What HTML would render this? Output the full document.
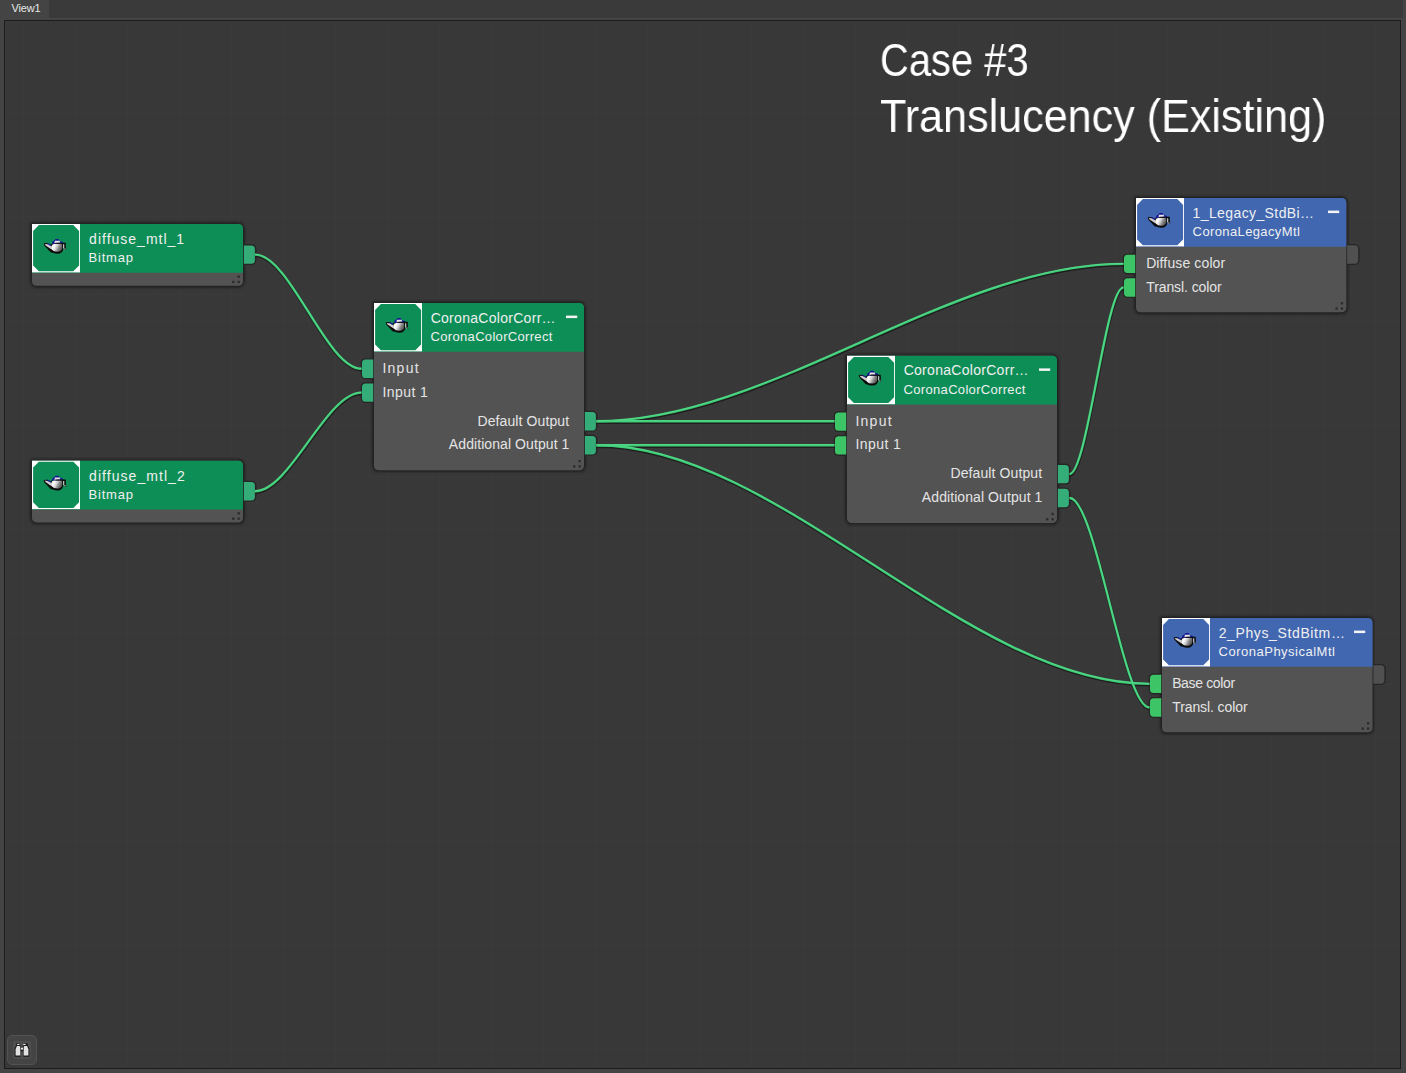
<!DOCTYPE html>
<html><head><meta charset="utf-8"><title>Slate Material Editor - View1</title>
<style>
html,body{margin:0;padding:0}
body{width:1406px;height:1073px;background:#444444;position:relative;overflow:hidden;font-family:"Liberation Sans",sans-serif}
#topbar{position:absolute;left:49px;top:0;width:1354px;height:18px;background:#3a3a3a}
#canvas{position:absolute;left:4px;top:20px;width:1395px;height:1047px;border:1px solid #1c1c1c;background-color:#383838;
 background-image:linear-gradient(to right,rgba(255,255,255,.010) 1px,transparent 1px),linear-gradient(to bottom,rgba(255,255,255,.010) 1px,transparent 1px);
 background-size:26px 26px;background-position:18px 13px}
#gfx{position:absolute;left:0;top:0}
.t{position:absolute;white-space:pre;line-height:normal;transform-origin:0 0;display:block}
#nav{position:absolute;left:7px;top:1035px;width:28px;height:28px;border:1px solid #525252;border-radius:5px;background:#444444}
#nav i{position:absolute;left:5px;top:5px;width:18px;height:18px;border-radius:2px;background:#4e4e4e}
</style></head><body>
<div id="topbar"></div>
<div id="canvas"></div>
<div id="nav"><i></i></div>
<svg id="gfx" width="1406" height="1073" viewBox="0 0 1406 1073">
<defs>
<filter id="soft2" x="-5%" y="-10%" width="110%" height="120%"><feGaussianBlur stdDeviation="1.05"/></filter>
<filter id="soft" x="-5%" y="-5%" width="110%" height="110%"><feGaussianBlur stdDeviation="0.65"/></filter>
<linearGradient id="tpg" x1="0" y1="0" x2="1" y2="0.35">
<stop offset="0" stop-color="#e6e6e6"/><stop offset="0.3" stop-color="#ffffff"/><stop offset="0.55" stop-color="#cfcfcf"/><stop offset="0.75" stop-color="#8e8e8e"/><stop offset="1" stop-color="#5a5a5a"/>
</linearGradient>
<g id="teapot">
<path d="M5.7,12.2 L9.4,12.0 L14.2,14.6 L14.6,22 L12.6,21.2 L6.4,14.8 Z" fill="#0c0c0c"/>
<path d="M12.8,15 Q13,12 16,12 H24.6 Q25.6,12.6 25.4,17 Q25,22.8 19.4,22.8 Q14.6,22.8 13,19.6 Z" fill="#0b0b0b"/>
<path d="M24.4,12.7 H27 V17.6 L27.8,18.8" fill="none" stroke="#0e0e0e" stroke-width="1.7"/>
<path d="M13.9,12.6 L14.6,10.4 L16.6,9.2 L17.6,8 L20.6,8 L21.6,9.9 L25,11 L25.4,12.2 L15,13 Z" fill="#161694"/>
<path d="M9.2,11.9 L13,13.6 L12.8,15 L9.6,13.2 Z" fill="#1c1cb0"/>
<path d="M6.7,12.9 L9.4,13.3 L13.6,15.4 L14.2,18.4 L12.4,17.8 L7.6,14.4 Z" fill="#cfcfcf"/>
<path d="M13.4,15.4 Q13.6,12.9 16,12.9 H23.6 Q24.4,13.4 24.2,17 Q23.8,20.8 19.4,20.8 Q15.4,20.8 13.8,18.6 Z" fill="url(#tpg)"/>
<path d="M16.4,12.2 L16.9,9.7 L21.6,9.7 L22.4,11.6 Z" fill="#e6e6e6"/>
<path d="M17.4,12.3 H25.4" stroke="#141414" stroke-width="1"/>
<path d="M25.7,13.3 V17.4" fill="none" stroke="#dcdcdc" stroke-width="1"/>
<rect x="26.4" y="17.5" width="1.1" height="1.1" fill="#e8e8e8"/>
</g>
</defs>
<path d="M31.7,222.3 H238.49999999999997 A6.3,6.3 0 0 1 244.79999999999998,228.60000000000002 V281.5 A6.3,6.3 0 0 1 238.49999999999997,287.8 H36.5 A6.3,6.3 0 0 1 30.2,281.5 V223.8 A1.5,1.5 0 0 1 31.7,222.3 Z" fill="#232323" filter="url(#soft2)"/>
<path d="M243,244.1 H251.5 A5,5 0 0 1 256.5,249.1 V260.1 A5,5 0 0 1 251.5,265.1 H243 V244.1 Z" fill="#272727" filter="url(#soft)"/><path d="M243.9,245.4 H251.3 A3.6,3.6 0 0 1 254.9,249.0 V260.2 A3.6,3.6 0 0 1 251.3,263.8 H243.9 V245.4 Z" fill="#35ad78"/>
<path d="M32,224 H238.5 A4.5,4.5 0 0 1 243,228.5 V281.2 A4.5,4.5 0 0 1 238.5,285.7 H36.5 A4.5,4.5 0 0 1 32,281.2 V224 Z" fill="#535353"/>
<path d="M32,224 H238.5 A4.5,4.5 0 0 1 243,228.5 V272.7 H32 V224 Z" fill="#0e8e57"/>
<rect x="32" y="224" width="48" height="48.4" fill="#ffffff"/>
<path d="M38.9,225.1 H73.3 L79.1,230.9 V265.5 L73.3,271.3 H38.9 L33.1,265.5 V230.9 Z" fill="#0e8e57"/>
<use href="#teapot" x="38" y="231"/>
<rect x="237.5" y="280.79999999999995" width="2.3" height="2.3" fill="#2b2b2b"/>
<rect x="232.1" y="280.79999999999995" width="2.3" height="2.3" fill="#2b2b2b"/>
<rect x="237.5" y="275.49999999999994" width="2.3" height="2.3" fill="#2b2b2b"/>
<path d="M31.7,459.0 H238.49999999999997 A6.3,6.3 0 0 1 244.79999999999998,465.3 V518.2 A6.3,6.3 0 0 1 238.49999999999997,524.5 H36.5 A6.3,6.3 0 0 1 30.2,518.2 V460.5 A1.5,1.5 0 0 1 31.7,459.0 Z" fill="#232323" filter="url(#soft2)"/>
<path d="M243,480.7 H251.5 A5,5 0 0 1 256.5,485.7 V496.7 A5,5 0 0 1 251.5,501.7 H243 V480.7 Z" fill="#272727" filter="url(#soft)"/><path d="M243.9,482.0 H251.3 A3.6,3.6 0 0 1 254.9,485.6 V496.79999999999995 A3.6,3.6 0 0 1 251.3,500.4 H243.9 V482.0 Z" fill="#35ad78"/>
<path d="M32,460.7 H238.5 A4.5,4.5 0 0 1 243,465.2 V517.9 A4.5,4.5 0 0 1 238.5,522.4 H36.5 A4.5,4.5 0 0 1 32,517.9 V460.7 Z" fill="#535353"/>
<path d="M32,460.7 H238.5 A4.5,4.5 0 0 1 243,465.2 V509.4 H32 V460.7 Z" fill="#0e8e57"/>
<rect x="32" y="460.7" width="48" height="48.4" fill="#ffffff"/>
<path d="M38.9,461.8 H73.3 L79.1,467.6 V502.2 L73.3,508.0 H38.9 L33.1,502.2 V467.6 Z" fill="#0e8e57"/>
<use href="#teapot" x="38" y="467.7"/>
<rect x="237.5" y="517.5" width="2.3" height="2.3" fill="#2b2b2b"/>
<rect x="232.1" y="517.5" width="2.3" height="2.3" fill="#2b2b2b"/>
<rect x="237.5" y="512.2" width="2.3" height="2.3" fill="#2b2b2b"/>
<path d="M373.7,301.3 H579.5 A6.3,6.3 0 0 1 585.8,307.6 V466.0 A6.3,6.3 0 0 1 579.5,472.3 H378.5 A6.3,6.3 0 0 1 372.2,466.0 V302.8 A1.5,1.5 0 0 1 373.7,301.3 Z" fill="#232323" filter="url(#soft2)"/>
<path d="M365.6,358.3 H374.0 V379.3 H365.6 A5,5 0 0 1 360.6,374.3 V363.3 A5,5 0 0 1 365.6,358.3 Z" fill="#272727" filter="url(#soft)"/><path d="M365.6,359.6 H373.2 V378.0 H365.6 A3.6,3.6 0 0 1 362,374.4 V363.20000000000005 A3.6,3.6 0 0 1 365.6,359.6 Z" fill="#35ad78"/>
<path d="M365.6,382.1 H374.0 V403.1 H365.6 A5,5 0 0 1 360.6,398.1 V387.1 A5,5 0 0 1 365.6,382.1 Z" fill="#272727" filter="url(#soft)"/><path d="M365.6,383.40000000000003 H373.2 V401.8 H365.6 A3.6,3.6 0 0 1 362,398.2 V387.00000000000006 A3.6,3.6 0 0 1 365.6,383.40000000000003 Z" fill="#35ad78"/>
<path d="M584,410.8 H592.5 A5,5 0 0 1 597.5,415.8 V426.8 A5,5 0 0 1 592.5,431.8 H584 V410.8 Z" fill="#272727" filter="url(#soft)"/><path d="M584.9,412.1 H592.3 A3.6,3.6 0 0 1 595.9,415.70000000000005 V426.9 A3.6,3.6 0 0 1 592.3,430.5 H584.9 V412.1 Z" fill="#35ad78"/>
<path d="M584,434.7 H592.5 A5,5 0 0 1 597.5,439.7 V450.7 A5,5 0 0 1 592.5,455.7 H584 V434.7 Z" fill="#272727" filter="url(#soft)"/><path d="M584.9,436.0 H592.3 A3.6,3.6 0 0 1 595.9,439.6 V450.79999999999995 A3.6,3.6 0 0 1 592.3,454.4 H584.9 V436.0 Z" fill="#35ad78"/>
<path d="M374,303 H579.5 A4.5,4.5 0 0 1 584,307.5 V465.7 A4.5,4.5 0 0 1 579.5,470.2 H378.5 A4.5,4.5 0 0 1 374,465.7 V303 Z" fill="#535353"/>
<path d="M374,303 H579.5 A4.5,4.5 0 0 1 584,307.5 V351.7 H374 V303 Z" fill="#0e8e57"/>
<rect x="374" y="303" width="48" height="48.4" fill="#ffffff"/>
<path d="M380.90000000000003,304.1 H415.3 L421.1,309.90000000000003 V344.5 L415.3,350.3 H380.90000000000003 L375.1,344.5 V309.90000000000003 Z" fill="#0e8e57"/>
<use href="#teapot" x="380" y="310"/>
<rect x="566" y="315.6" width="11.2" height="2.5" fill="#f4f4f4"/>
<rect x="578.5" y="465.29999999999995" width="2.3" height="2.3" fill="#2b2b2b"/>
<rect x="573.1" y="465.29999999999995" width="2.3" height="2.3" fill="#2b2b2b"/>
<rect x="578.5" y="459.99999999999994" width="2.3" height="2.3" fill="#2b2b2b"/>
<path d="M846.7,354.1 H1052.5 A6.3,6.3 0 0 1 1058.8,360.40000000000003 V518.8000000000001 A6.3,6.3 0 0 1 1052.5,525.1 H851.5 A6.3,6.3 0 0 1 845.2,518.8000000000001 V355.6 A1.5,1.5 0 0 1 846.7,354.1 Z" fill="#232323" filter="url(#soft2)"/>
<path d="M838.6,411.1 H847.0 V432.1 H838.6 A5,5 0 0 1 833.6,427.1 V416.1 A5,5 0 0 1 838.6,411.1 Z" fill="#272727" filter="url(#soft)"/><path d="M838.6,412.40000000000003 H846.2 V430.8 H838.6 A3.6,3.6 0 0 1 835,427.2 V416.00000000000006 A3.6,3.6 0 0 1 838.6,412.40000000000003 Z" fill="#3dc467"/>
<path d="M838.6,434.9 H847.0 V455.9 H838.6 A5,5 0 0 1 833.6,450.9 V439.9 A5,5 0 0 1 838.6,434.9 Z" fill="#272727" filter="url(#soft)"/><path d="M838.6,436.2 H846.2 V454.59999999999997 H838.6 A3.6,3.6 0 0 1 835,450.99999999999994 V439.8 A3.6,3.6 0 0 1 838.6,436.2 Z" fill="#3dc467"/>
<path d="M1057,463.6 H1065.5 A5,5 0 0 1 1070.5,468.6 V479.6 A5,5 0 0 1 1065.5,484.6 H1057 V463.6 Z" fill="#272727" filter="url(#soft)"/><path d="M1057.9,464.90000000000003 H1065.3000000000002 A3.6,3.6 0 0 1 1068.9,468.50000000000006 V479.7 A3.6,3.6 0 0 1 1065.3000000000002,483.3 H1057.9 V464.90000000000003 Z" fill="#35ad78"/>
<path d="M1057,487.5 H1065.5 A5,5 0 0 1 1070.5,492.5 V503.5 A5,5 0 0 1 1065.5,508.5 H1057 V487.5 Z" fill="#272727" filter="url(#soft)"/><path d="M1057.9,488.8 H1065.3000000000002 A3.6,3.6 0 0 1 1068.9,492.40000000000003 V503.59999999999997 A3.6,3.6 0 0 1 1065.3000000000002,507.2 H1057.9 V488.8 Z" fill="#35ad78"/>
<path d="M847,355.8 H1052.5 A4.5,4.5 0 0 1 1057,360.3 V518.5 A4.5,4.5 0 0 1 1052.5,523.0 H851.5 A4.5,4.5 0 0 1 847,518.5 V355.8 Z" fill="#535353"/>
<path d="M847,355.8 H1052.5 A4.5,4.5 0 0 1 1057,360.3 V404.5 H847 V355.8 Z" fill="#0e8e57"/>
<rect x="847" y="355.8" width="48" height="48.4" fill="#ffffff"/>
<path d="M853.9,356.90000000000003 H888.3000000000001 L894.1,362.70000000000005 V397.3 L888.3000000000001,403.1 H853.9 L848.1,397.3 V362.70000000000005 Z" fill="#0e8e57"/>
<use href="#teapot" x="853" y="362.8"/>
<rect x="1039" y="368.40000000000003" width="11.2" height="2.5" fill="#f4f4f4"/>
<rect x="1051.5" y="518.1" width="2.3" height="2.3" fill="#2b2b2b"/>
<rect x="1046.1" y="518.1" width="2.3" height="2.3" fill="#2b2b2b"/>
<rect x="1051.5" y="512.8000000000001" width="2.3" height="2.3" fill="#2b2b2b"/>
<path d="M1135.7,196.3 H1341.8000000000002 A6.3,6.3 0 0 1 1348.1000000000001,202.60000000000002 V308.09999999999997 A6.3,6.3 0 0 1 1341.8000000000002,314.4 H1140.5 A6.3,6.3 0 0 1 1134.2,308.09999999999997 V197.8 A1.5,1.5 0 0 1 1135.7,196.3 Z" fill="#232323" filter="url(#soft2)"/>
<path d="M1127.6,253.39999999999998 H1136.0 V274.4 H1127.6 A5,5 0 0 1 1122.6,269.4 V258.4 A5,5 0 0 1 1127.6,253.39999999999998 Z" fill="#272727" filter="url(#soft)"/><path d="M1127.6,254.7 H1135.2 V273.09999999999997 H1127.6 A3.6,3.6 0 0 1 1124,269.49999999999994 V258.3 A3.6,3.6 0 0 1 1127.6,254.7 Z" fill="#3dc467"/>
<path d="M1127.6,277.0 H1136.0 V298.0 H1127.6 A5,5 0 0 1 1122.6,293.0 V282.0 A5,5 0 0 1 1127.6,277.0 Z" fill="#272727" filter="url(#soft)"/><path d="M1127.6,278.3 H1135.2 V296.7 H1127.6 A3.6,3.6 0 0 1 1124,293.09999999999997 V281.90000000000003 A3.6,3.6 0 0 1 1127.6,278.3 Z" fill="#3dc467"/>
<path d="M1346.3,244.0 H1354.8 A5,5 0 0 1 1359.8,249.0 V260.0 A5,5 0 0 1 1354.8,265.0 H1346.3 V244.0 Z" fill="#272727" filter="url(#soft)"/><path d="M1347.2,245.3 H1354.6000000000001 A3.6,3.6 0 0 1 1358.2,248.9 V260.09999999999997 A3.6,3.6 0 0 1 1354.6000000000001,263.7 H1347.2 V245.3 Z" fill="#505050"/>
<path d="M1136,198 H1341.8 A4.5,4.5 0 0 1 1346.3,202.5 V307.8 A4.5,4.5 0 0 1 1341.8,312.3 H1140.5 A4.5,4.5 0 0 1 1136,307.8 V198 Z" fill="#535353"/>
<path d="M1136,198 H1341.8 A4.5,4.5 0 0 1 1346.3,202.5 V246.7 H1136 V198 Z" fill="#4167b1"/>
<rect x="1136" y="198" width="48" height="48.4" fill="#ffffff"/>
<path d="M1142.8999999999999,199.1 H1177.3 L1183.1,204.9 V239.5 L1177.3,245.3 H1142.8999999999999 L1137.1,239.5 V204.9 Z" fill="#4167b1"/>
<use href="#teapot" x="1142" y="205"/>
<rect x="1328" y="210.6" width="11.2" height="2.5" fill="#f4f4f4"/>
<rect x="1340.8" y="307.4" width="2.3" height="2.3" fill="#2b2b2b"/>
<rect x="1335.3999999999999" y="307.4" width="2.3" height="2.3" fill="#2b2b2b"/>
<rect x="1340.8" y="302.09999999999997" width="2.3" height="2.3" fill="#2b2b2b"/>
<path d="M1161.7,616.3 H1368.0 A6.3,6.3 0 0 1 1374.3,622.5999999999999 V728.1 A6.3,6.3 0 0 1 1368.0,734.4 H1166.5 A6.3,6.3 0 0 1 1160.2,728.1 V617.8 A1.5,1.5 0 0 1 1161.7,616.3 Z" fill="#232323" filter="url(#soft2)"/>
<path d="M1153.6,673.4 H1162.0 V694.4 H1153.6 A5,5 0 0 1 1148.6,689.4 V678.4 A5,5 0 0 1 1153.6,673.4 Z" fill="#272727" filter="url(#soft)"/><path d="M1153.6,674.6999999999999 H1161.2 V693.0999999999999 H1153.6 A3.6,3.6 0 0 1 1150,689.4999999999999 V678.3 A3.6,3.6 0 0 1 1153.6,674.6999999999999 Z" fill="#3dc467"/>
<path d="M1153.6,697.0 H1162.0 V718.0 H1153.6 A5,5 0 0 1 1148.6,713.0 V702.0 A5,5 0 0 1 1153.6,697.0 Z" fill="#272727" filter="url(#soft)"/><path d="M1153.6,698.3 H1161.2 V716.6999999999999 H1153.6 A3.6,3.6 0 0 1 1150,713.0999999999999 V701.9 A3.6,3.6 0 0 1 1153.6,698.3 Z" fill="#3dc467"/>
<path d="M1372.5,664.0 H1381.0 A5,5 0 0 1 1386.0,669.0 V680.0 A5,5 0 0 1 1381.0,685.0 H1372.5 V664.0 Z" fill="#272727" filter="url(#soft)"/><path d="M1373.4,665.3 H1380.8000000000002 A3.6,3.6 0 0 1 1384.4,668.9 V680.0999999999999 A3.6,3.6 0 0 1 1380.8000000000002,683.6999999999999 H1373.4 V665.3 Z" fill="#505050"/>
<path d="M1162,618 H1368.0 A4.5,4.5 0 0 1 1372.5,622.5 V727.8 A4.5,4.5 0 0 1 1368.0,732.3 H1166.5 A4.5,4.5 0 0 1 1162,727.8 V618 Z" fill="#535353"/>
<path d="M1162,618 H1368.0 A4.5,4.5 0 0 1 1372.5,622.5 V666.7 H1162 V618 Z" fill="#4167b1"/>
<rect x="1162" y="618" width="48" height="48.4" fill="#ffffff"/>
<path d="M1168.8999999999999,619.1 H1203.3 L1209.1,624.9 V659.5 L1203.3,665.3 H1168.8999999999999 L1163.1,659.5 V624.9 Z" fill="#4167b1"/>
<use href="#teapot" x="1168" y="625"/>
<rect x="1354" y="630.6" width="11.2" height="2.5" fill="#f4f4f4"/>
<rect x="1367.0" y="727.4" width="2.3" height="2.3" fill="#2b2b2b"/>
<rect x="1361.6" y="727.4" width="2.3" height="2.3" fill="#2b2b2b"/>
<rect x="1367.0" y="722.1" width="2.3" height="2.3" fill="#2b2b2b"/>
<path d="M255,254.6 C290.145,254.6 326.355,368.8 361.5,368.8" transform="translate(0.3,1.1)" stroke="#1f1f1f" stroke-width="3.2" fill="none" stroke-linecap="butt"/>
<path d="M255,491.2 C290.145,491.2 326.355,392.6 361.5,392.6" transform="translate(0.3,1.1)" stroke="#1f1f1f" stroke-width="3.2" fill="none" stroke-linecap="butt"/>
<path d="M596.5,421.3 C770.41,421.3 949.59,263.9 1123.5,263.9" transform="translate(0.3,1.1)" stroke="#1f1f1f" stroke-width="3.2" fill="none" stroke-linecap="butt"/>
<path d="M596.5,421.3 L834.5,421.3" transform="translate(0.3,1.1)" stroke="#1f1f1f" stroke-width="3.2" fill="none" stroke-linecap="butt"/>
<path d="M596.5,445.2 L834.5,445.2" transform="translate(0.3,1.1)" stroke="#1f1f1f" stroke-width="3.2" fill="none" stroke-linecap="butt"/>
<path d="M596.5,445.2 C778.99,445.2 967.01,683.9 1149.5,683.9" transform="translate(0.3,1.1)" stroke="#1f1f1f" stroke-width="3.2" fill="none" stroke-linecap="butt"/>
<path d="M1069.5,474.1 C1087.32,474.1 1105.68,287.5 1123.5,287.5" transform="translate(0.3,1.1)" stroke="#1f1f1f" stroke-width="3.2" fill="none" stroke-linecap="butt"/>
<path d="M1069.5,498.0 C1095.9,498.0 1123.1,707.5 1149.5,707.5" transform="translate(0.3,1.1)" stroke="#1f1f1f" stroke-width="3.2" fill="none" stroke-linecap="butt"/>
<path d="M255,254.6 C290.145,254.6 326.355,368.8 361.5,368.8" stroke="#3ccd76" stroke-width="2.4" fill="none"/>
<path d="M255,254.6 C290.145,254.6 326.355,368.8 361.5,368.8" transform="translate(0,-0.5)" stroke="#7fe6a6" stroke-width="0.9" fill="none" opacity="0.45"/>
<path d="M255,491.2 C290.145,491.2 326.355,392.6 361.5,392.6" stroke="#3ccd76" stroke-width="2.4" fill="none"/>
<path d="M255,491.2 C290.145,491.2 326.355,392.6 361.5,392.6" transform="translate(0,-0.5)" stroke="#7fe6a6" stroke-width="0.9" fill="none" opacity="0.45"/>
<path d="M596.5,421.3 C770.41,421.3 949.59,263.9 1123.5,263.9" stroke="#3ccd76" stroke-width="2.4" fill="none"/>
<path d="M596.5,421.3 C770.41,421.3 949.59,263.9 1123.5,263.9" transform="translate(0,-0.5)" stroke="#7fe6a6" stroke-width="0.9" fill="none" opacity="0.45"/>
<path d="M596.5,421.3 L834.5,421.3" stroke="#3ccd76" stroke-width="2.4" fill="none"/>
<path d="M596.5,421.3 L834.5,421.3" transform="translate(0,-0.5)" stroke="#7fe6a6" stroke-width="0.9" fill="none" opacity="0.45"/>
<path d="M596.5,445.2 L834.5,445.2" stroke="#3ccd76" stroke-width="2.4" fill="none"/>
<path d="M596.5,445.2 L834.5,445.2" transform="translate(0,-0.5)" stroke="#7fe6a6" stroke-width="0.9" fill="none" opacity="0.45"/>
<path d="M596.5,445.2 C778.99,445.2 967.01,683.9 1149.5,683.9" stroke="#3ccd76" stroke-width="2.4" fill="none"/>
<path d="M596.5,445.2 C778.99,445.2 967.01,683.9 1149.5,683.9" transform="translate(0,-0.5)" stroke="#7fe6a6" stroke-width="0.9" fill="none" opacity="0.45"/>
<path d="M1069.5,474.1 C1087.32,474.1 1105.68,287.5 1123.5,287.5" stroke="#3ccd76" stroke-width="2.4" fill="none"/>
<path d="M1069.5,474.1 C1087.32,474.1 1105.68,287.5 1123.5,287.5" transform="translate(0,-0.5)" stroke="#7fe6a6" stroke-width="0.9" fill="none" opacity="0.45"/>
<path d="M1069.5,498.0 C1095.9,498.0 1123.1,707.5 1149.5,707.5" stroke="#3ccd76" stroke-width="2.4" fill="none"/>
<path d="M1069.5,498.0 C1095.9,498.0 1123.1,707.5 1149.5,707.5" transform="translate(0,-0.5)" stroke="#7fe6a6" stroke-width="0.9" fill="none" opacity="0.45"/>

<!-- binoculars -->
<g transform="translate(13,1041)">
<path d="M3.2,2.2 h3.6 v1.6 l1.4,2 h1.6 l1.4,-2 v-1.6 h3.6 v1.8 l1.6,3.6 v8.2 h-6 v-5.6 h-2.8 v5.6 h-6 v-8.2 l1.6,-3.6 z" fill="#1a1a1a"/>
<rect x="4.2" y="2.9" width="2.2" height="1.1" fill="#f0f0f0"/><rect x="10.4" y="2.9" width="2.2" height="1.1" fill="#f0f0f0"/>
<path d="M3.9,5 h2.8 l0.6,1 v8.6 h-4.7 v-6.4 z" fill="#e2e2e2"/>
<path d="M14.1,5 h-2.8 l-0.6,1 v8.6 h4.7 v-6.4 z" fill="#e2e2e2"/>
<rect x="8" y="6.6" width="2" height="2" fill="#e8e8e8"/>
</g>
</svg>
<span class="t" id="t0" style="left:89.70px;top:230.80px;font-size:14px;color:#f0f0f0;letter-spacing:1.000px;margin-left:-0.60px;">diffuse_mtl_1</span>
<span class="t" id="t1" style="left:89.70px;top:250.40px;font-size:13px;color:#f0f0f0;letter-spacing:0.793px;margin-left:-1.13px;">Bitmap</span>
<span class="t" id="t2" style="left:89.70px;top:467.50px;font-size:14px;color:#f0f0f0;letter-spacing:1.052px;margin-left:-0.60px;">diffuse_mtl_2</span>
<span class="t" id="t3" style="left:89.70px;top:487.10px;font-size:13px;color:#f0f0f0;letter-spacing:0.793px;margin-left:-1.13px;">Bitmap</span>
<span class="t" id="t4" style="left:431.70px;top:309.80px;font-size:14px;color:#f0f0f0;letter-spacing:0.291px;margin-left:-1.07px;">CoronaColorCorr…</span>
<span class="t" id="t5" style="left:431.70px;top:329.40px;font-size:13px;color:#f0f0f0;letter-spacing:0.319px;margin-left:-1.09px;">CoronaColorCorrect</span>
<span class="t" id="t6" style="left:383.70px;top:359.80px;font-size:14px;color:#e4e4e4;letter-spacing:1.269px;margin-left:-1.31px;">Input</span>
<span class="t" id="t7" style="left:383.70px;top:383.70px;font-size:14px;color:#e4e4e4;letter-spacing:0.438px;margin-left:-1.31px;">Input 1</span>
<span class="t" id="t8" style="left:478.60px;top:412.80px;font-size:14px;color:#e4e4e4;letter-spacing:0.108px;margin-left:-1.18px;">Default Output</span>
<span class="t" id="t9" style="left:449.10px;top:435.90px;font-size:14px;color:#e4e4e4;letter-spacing:0.081px;margin-left:-0.26px;">Additional Output 1</span>
<span class="t" id="t10" style="left:904.70px;top:361.80px;font-size:14px;color:#f0f0f0;letter-spacing:0.291px;margin-left:-1.07px;">CoronaColorCorr…</span>
<span class="t" id="t11" style="left:904.70px;top:381.60px;font-size:13px;color:#f0f0f0;letter-spacing:0.319px;margin-left:-1.09px;">CoronaColorCorrect</span>
<span class="t" id="t12" style="left:856.70px;top:412.80px;font-size:14px;color:#e4e4e4;letter-spacing:1.269px;margin-left:-1.31px;">Input</span>
<span class="t" id="t13" style="left:856.70px;top:435.60px;font-size:14px;color:#e4e4e4;letter-spacing:0.438px;margin-left:-1.31px;">Input 1</span>
<span class="t" id="t14" style="left:951.60px;top:464.60px;font-size:14px;color:#e4e4e4;letter-spacing:0.108px;margin-left:-1.18px;">Default Output</span>
<span class="t" id="t15" style="left:922.10px;top:488.80px;font-size:14px;color:#e4e4e4;letter-spacing:0.081px;margin-left:-0.26px;">Additional Output 1</span>
<span class="t" id="t16" style="left:1193.70px;top:204.80px;font-size:14px;color:#f0f0f0;letter-spacing:0.395px;margin-left:-1.13px;">1_Legacy_StdBi…</span>
<span class="t" id="t17" style="left:1193.70px;top:224.40px;font-size:13px;color:#f0f0f0;letter-spacing:0.381px;margin-left:-1.09px;">CoronaLegacyMtl</span>
<span class="t" id="t18" style="left:1147.30px;top:254.90px;font-size:14px;color:#e4e4e4;letter-spacing:0.126px;margin-left:-1.18px;">Diffuse color</span>
<span class="t" id="t19" style="left:1146.50px;top:278.50px;font-size:14px;color:#e4e4e4;letter-spacing:-0.086px;margin-left:-0.32px;">Transl. color</span>
<span class="t" id="t20" style="left:1219.70px;top:624.80px;font-size:14px;color:#f0f0f0;letter-spacing:0.622px;margin-left:-1.02px;">2_Phys_StdBitm…</span>
<span class="t" id="t21" style="left:1219.70px;top:644.40px;font-size:13px;color:#f0f0f0;letter-spacing:0.496px;margin-left:-1.09px;">CoronaPhysicalMtl</span>
<span class="t" id="t22" style="left:1173.30px;top:674.90px;font-size:14px;color:#e4e4e4;letter-spacing:-0.346px;margin-left:-1.18px;">Base color</span>
<span class="t" id="t23" style="left:1172.50px;top:698.50px;font-size:14px;color:#e4e4e4;letter-spacing:-0.094px;margin-left:-0.32px;">Transl. color</span>
<span class="t" id="t24" style="left:11.80px;top:1.50px;font-size:11px;color:#e8e8e8;letter-spacing:-0.157px;margin-left:-0.29px;">View1</span>
<span class="t" id="t25" style="left:882.30px;top:32.20px;font-size:47px;color:#ffffff;transform:scaleX(0.8484);margin-left:-2.03px;will-change:transform;">Case #3</span>
<span class="t" id="t26" style="left:881.30px;top:88.30px;font-size:47px;color:#ffffff;transform:scaleX(0.9172);margin-left:-1.04px;will-change:transform;">Translucency (Existing)</span>
</body></html>
